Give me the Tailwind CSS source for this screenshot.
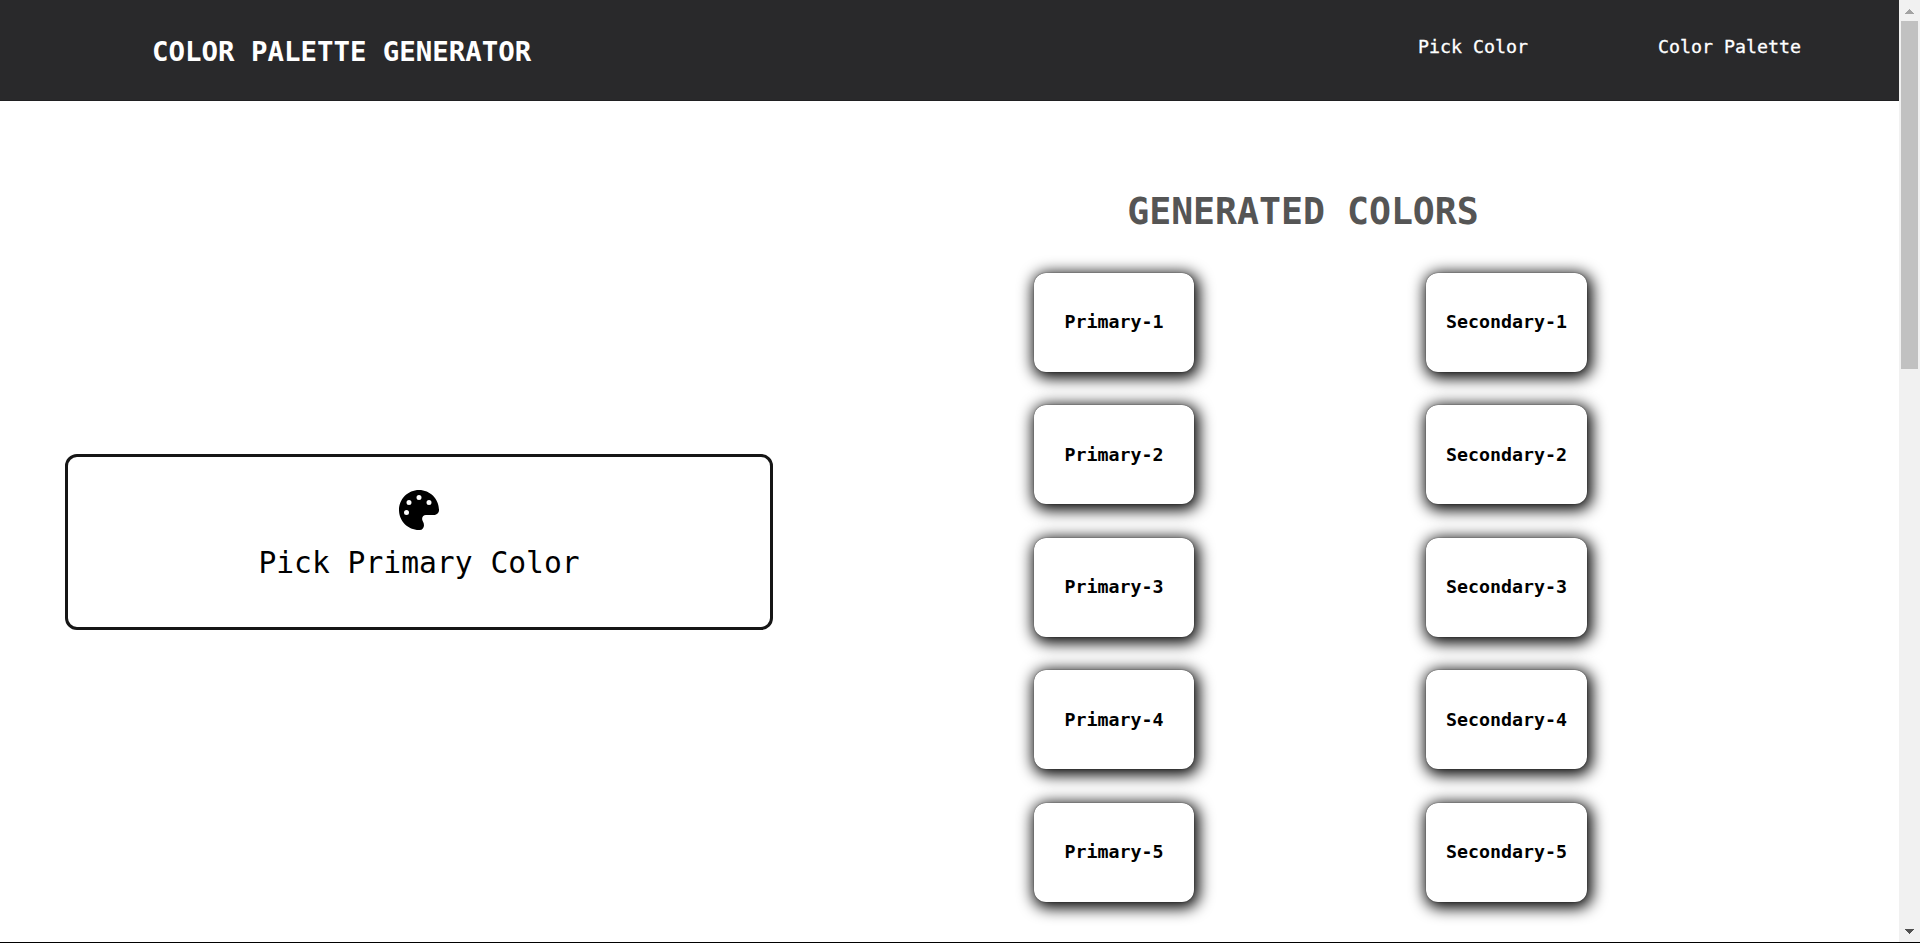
<!DOCTYPE html>
<html lang="en">
<head>
<meta charset="utf-8">
<title>Color Palette Generator</title>
<script src="https://cdn.jsdelivr.net/npm/@tailwindcss/browser@4"></script>
</head>
<body class="h-[943px] overflow-hidden bg-white font-['DejaVu_Sans_Mono',monospace] text-black">
<div class="flex h-[943px] flex-col border-b border-black">
  <div class="flex min-h-0 flex-1">
    <div class="flex min-w-0 flex-1 flex-col">
      <header class="flex h-[101px] shrink-0 items-start justify-between border-b border-[#202022] bg-[#29292b] pl-[152px] pr-[98px] text-white">
        <h1 class="pt-[34px] text-[27.4px] leading-[36px] font-bold whitespace-nowrap">COLOR PALETTE GENERATOR</h1>
        <nav class="flex gap-[130px] pt-[35px] text-[18.27px] leading-[24px] whitespace-nowrap [-webkit-text-stroke:0.3px_white]">
          <a>Pick Color</a>
          <a>Color Palette</a>
        </nav>
      </header>
      <main class="flex min-h-0 flex-1">
        <section class="w-[838px] pt-[353px] pl-[65px]">
          <div class="flex h-[176px] w-[708px] flex-col items-center rounded-xl border-3 border-[#161616] pt-[33px]">
            <svg class="size-10" viewBox="0 0 512 512" fill="currentColor"><path d="M512 256c0 .9 0 1.8 0 2.7c-.4 36.5-33.6 61.3-70.1 61.3L344 320c-26.5 0-48 21.5-48 48c0 3.4 .4 6.7 1 9.9c2.1 10.2 6.5 20 10.8 29.9c6.1 13.8 12.1 27.5 12.1 42c0 31.8-21.6 60.7-53.4 62c-3.5 .1-7 .2-10.6 .2C114.6 512 0 397.4 0 256S114.6 0 256 0S512 114.6 512 256zM128 288a32 32 0 1 0 -64 0 32 32 0 1 0 64 0zm0-96a32 32 0 1 0 0-64 32 32 0 1 0 0 64zM288 96a32 32 0 1 0 -64 0 32 32 0 1 0 64 0zm96 96a32 32 0 1 0 0-64 32 32 0 1 0 0 64z"/></svg>
            <p class="mt-[13px] text-[29.65px] leading-[40px] whitespace-nowrap">Pick Primary Color</p>
          </div>
        </section>
        <section class="flex w-[930px] flex-col items-center pt-[87px]">
          <h2 class="text-[36.5px] leading-[48px] font-bold whitespace-nowrap text-[#555]">GENERATED COLORS</h2>
          <div class="mt-[36.6px] ml-[195.7px] grid w-[553.6px] grid-cols-[160.5px_161.6px] justify-between gap-y-[33.5px] self-start text-[18.27px] font-bold *:flex *:h-[99px] *:items-center *:justify-center *:rounded-xl *:bg-white *:shadow-[2px_3px_15px_3px_#000,0_0_1px_0_#000]">
            <div>Primary-1</div><div>Secondary-1</div>
            <div>Primary-2</div><div>Secondary-2</div>
            <div>Primary-3</div><div>Secondary-3</div>
            <div>Primary-4</div><div>Secondary-4</div>
            <div>Primary-5</div><div>Secondary-5</div>
          </div>
        </section>
      </main>
    </div>
    <div class="flex w-[21px] shrink-0 flex-col items-center bg-[#f1f1f1]">
      <svg class="h-[21px] w-[21px] shrink-0" viewBox="0 0 21 21" shape-rendering="crispEdges"><path d="M6 14h9l-4.5-5z" fill="#a3a3a3"/></svg>
      <div class="h-[348px] w-[17px] bg-[#c1c1c1]"></div>
      <svg class="mt-auto h-[21px] w-[21px] shrink-0" viewBox="0 0 21 21" shape-rendering="crispEdges"><path d="M6 8h9l-4.5 5z" fill="#505050"/></svg>
    </div>
  </div>
</div>
</body>
</html>
